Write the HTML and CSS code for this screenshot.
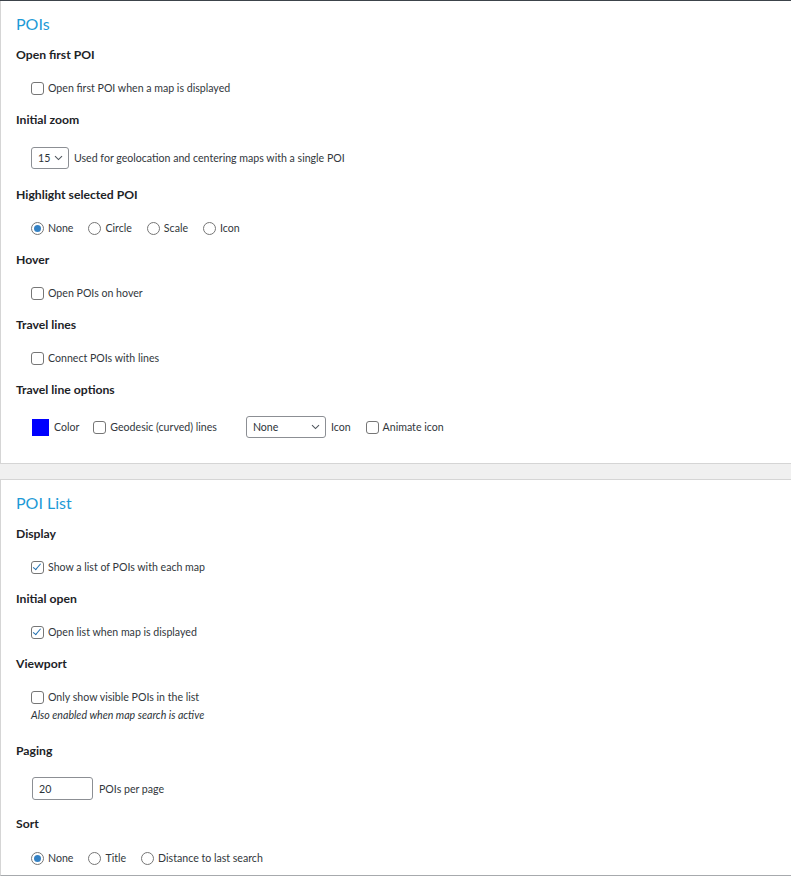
FILE: index.html
```html
<!DOCTYPE html>
<html lang="en">

<head>
    <meta charset="UTF-8">
    <meta name="viewport" content="width=device-width, initial-scale=1.0">
    <title>POI settings</title>
    <link rel="stylesheet" href="styles.css">
</head>

<body>
    <div class="topbar"></div>

    <section class="panel">
        <h2 class="panel-title">POIs</h2>

        <div class="field">
            <h3 class="field-title">Open first POI</h3>
            <div class="field-control">
                <label class="opt"><input type="checkbox" class="box"><span>Open first POI when a map is displayed</span></label>
            </div>
        </div>

        <div class="field">
            <h3 class="field-title">Initial zoom</h3>
            <div class="field-control tall">
                <span class="select-wrap zoom-select">
                    <select class="sel">
                        <option>15</option>
                    </select>
                    <svg class="chev" width="9" height="6" viewBox="0 0 9 6"><path d="M1 1.2 L4.5 4.6 L8 1.2" fill="none" stroke="#50575e" stroke-width="1.1"/></svg>
                </span>
                <span class="hint">Used for geolocation and centering maps with a single POI</span>
            </div>
        </div>

        <div class="field">
            <h3 class="field-title">Highlight selected POI</h3>
            <div class="field-control">
                <div class="choices">
                    <label class="opt"><input type="radio" name="hl" class="dot" checked><span>None</span></label>
                    <label class="opt"><input type="radio" name="hl" class="dot"><span>Circle</span></label>
                    <label class="opt"><input type="radio" name="hl" class="dot"><span>Scale</span></label>
                    <label class="opt"><input type="radio" name="hl" class="dot"><span>Icon</span></label>
                </div>
            </div>
        </div>

        <div class="field">
            <h3 class="field-title">Hover</h3>
            <div class="field-control">
                <label class="opt"><input type="checkbox" class="box"><span>Open POIs on hover</span></label>
            </div>
        </div>

        <div class="field">
            <h3 class="field-title">Travel lines</h3>
            <div class="field-control">
                <label class="opt"><input type="checkbox" class="box"><span>Connect POIs with lines</span></label>
            </div>
        </div>

        <div class="field">
            <h3 class="field-title">Travel line options</h3>
            <div class="field-control tall line-options">
                <label class="opt color-opt"><span class="swatch"></span><span>Color</span></label>
                <label class="opt"><input type="checkbox" class="box"><span>Geodesic (curved) lines</span></label>
                <span class="select-wrap icon-select">
                    <select class="sel">
                        <option>None</option>
                    </select>
                    <svg class="chev" width="9" height="6" viewBox="0 0 9 6"><path d="M1 1.2 L4.5 4.6 L8 1.2" fill="none" stroke="#50575e" stroke-width="1.1"/></svg>
                </span>
                <span class="hint">Icon</span>
                <label class="opt"><input type="checkbox" class="box"><span>Animate icon</span></label>
            </div>
        </div>
    </section>

    <section class="panel last">
        <h2 class="panel-title">POI List</h2>

        <div class="field">
            <h3 class="field-title">Display</h3>
            <div class="field-control">
                <label class="opt"><input type="checkbox" class="box" checked><span>Show a list of POIs with each map</span></label>
            </div>
        </div>

        <div class="field">
            <h3 class="field-title">Initial open</h3>
            <div class="field-control">
                <label class="opt"><input type="checkbox" class="box" checked><span>Open list when map is displayed</span></label>
            </div>
        </div>

        <div class="field">
            <h3 class="field-title">Viewport</h3>
            <div class="field-control stacked">
                <label class="opt"><input type="checkbox" class="box"><span>Only show visible POIs in the list</span></label>
                <p class="note">Also enabled when map search is active</p>
            </div>
        </div>

        <div class="field">
            <h3 class="field-title">Paging</h3>
            <div class="field-control tall paging">
                <input type="text" class="num" value="20">
                <span class="hint">POIs per page</span>
            </div>
        </div>

        <div class="field">
            <h3 class="field-title">Sort</h3>
            <div class="field-control last-row">
                <div class="choices">
                    <label class="opt"><input type="radio" name="sort" class="dot" checked><span>None</span></label>
                    <label class="opt"><input type="radio" name="sort" class="dot"><span>Title</span></label>
                    <label class="opt"><input type="radio" name="sort" class="dot"><span>Distance to last search</span></label>
                </div>
            </div>
        </div>
    </section>
</body>

</html>
```

FILE: styles.css
```css
body {
    margin: 0;
    background: #f0f0f0;
    font-family: 'Lato', 'Open Sans', sans-serif;
    color: #2c3338;
}

.topbar {
    height: 1px;
    background: #3c434a;
}

.panel {
    background: #ffffff;
    border: 1px solid #d5d5d5;
    border-right: none;
    padding: 11px 15px 13px;
}

.panel:first-of-type {
    border-top: none;
}

.panel + .panel {
    margin-top: 15px;
}

.panel.last {
    padding-bottom: 0;
    border-bottom-color: #a7aaad;
}

.panel-title {
    margin: 0 0 3px;
    font-size: 16px;
    font-weight: 400;
    line-height: 24px;
    color: #1e9ad6;
}

.field-title {
    margin: 0;
    padding: 8px 0;
    font-size: 12.2px;
    font-weight: 700;
    line-height: 16px;
    color: #1d2327;
}

.field-control {
    display: flex;
    align-items: center;
    padding: 9px 0 8px 15px;
    font-size: 10.6px;
    line-height: 16px;
    color: #32373c;
}

.field-control.tall {
    padding-top: 11px;
    padding-bottom: 10px;
}

.field-control.line-options {
    padding-top: 10px;
    padding-bottom: 12px;
}

.field-control.paging {
    padding-top: 10px;
    padding-bottom: 8px;
}

.field-control.stacked {
    flex-direction: column;
    align-items: flex-start;
    padding-bottom: 12px;
}

.field-control.last-row {
    padding-top: 10px;
    padding-bottom: 9px;
}

.opt {
    display: flex;
    align-items: center;
    height: 16px;
    cursor: pointer;
}

.choices {
    display: flex;
    gap: 15px;
}

/* checkbox */
.box {
    appearance: none;
    box-sizing: border-box;
    width: 13px;
    height: 13px;
    margin: 0 4px 0 0;
    border: 1px solid #767676;
    border-radius: 3px;
    background: #fff;
    position: relative;
}

.box:checked::before {
    content: "";
    position: absolute;
    left: 3.2px;
    top: 0.4px;
    width: 3.2px;
    height: 6.6px;
    border: solid #2271b1;
    border-width: 0 1.5px 1.5px 0;
    transform: rotate(40deg);
}

/* radio */
.dot {
    appearance: none;
    box-sizing: border-box;
    width: 13px;
    height: 13px;
    margin: 0 4px 0 0;
    border: 1px solid #767676;
    border-radius: 50%;
    background: #fff;
    display: grid;
    place-items: center;
}

.dot:checked::before {
    content: "";
    width: 7px;
    height: 7px;
    border-radius: 50%;
    background: #3582c4;
}

.select-wrap {
    position: relative;
    display: inline-flex;
}

.sel {
    appearance: none;
    height: 22px;
    margin: 0;
    padding: 0 0 0 6px;
    border: 1px solid #8c8f94;
    border-radius: 3px;
    background: #fff;
    font-family: inherit;
    font-size: 10.6px;
    color: #2c3338;
}

.chev {
    position: absolute;
    right: 6px;
    top: 8px;
    pointer-events: none;
}

.zoom-select .sel {
    width: 38px;
}

.icon-select .sel {
    width: 80px;
}

.hint {
    margin-left: 5px;
}

.line-options .color-opt {
    margin-right: 14px;
}

.line-options .icon-select {
    margin-left: 29px;
}

.line-options .hint {
    margin-left: 5px;
    margin-right: 15px;
}

.swatch {
    width: 17px;
    height: 17px;
    margin: 0 5px 0 1px;
    background: #0000ff;
}

.note {
    margin: 2px 0 0;
    font-style: italic;
    color: #2c3338;
}

.num {
    width: 61px;
    height: 23px;
    box-sizing: border-box;
    margin: 0 0 0 1px;
    padding: 0 6px;
    border: 1px solid #8c8f94;
    border-radius: 3px;
    font-family: inherit;
    font-size: 10.6px;
    color: #2c3338;
}

.num + .hint {
    margin-left: 6px;
}
```
